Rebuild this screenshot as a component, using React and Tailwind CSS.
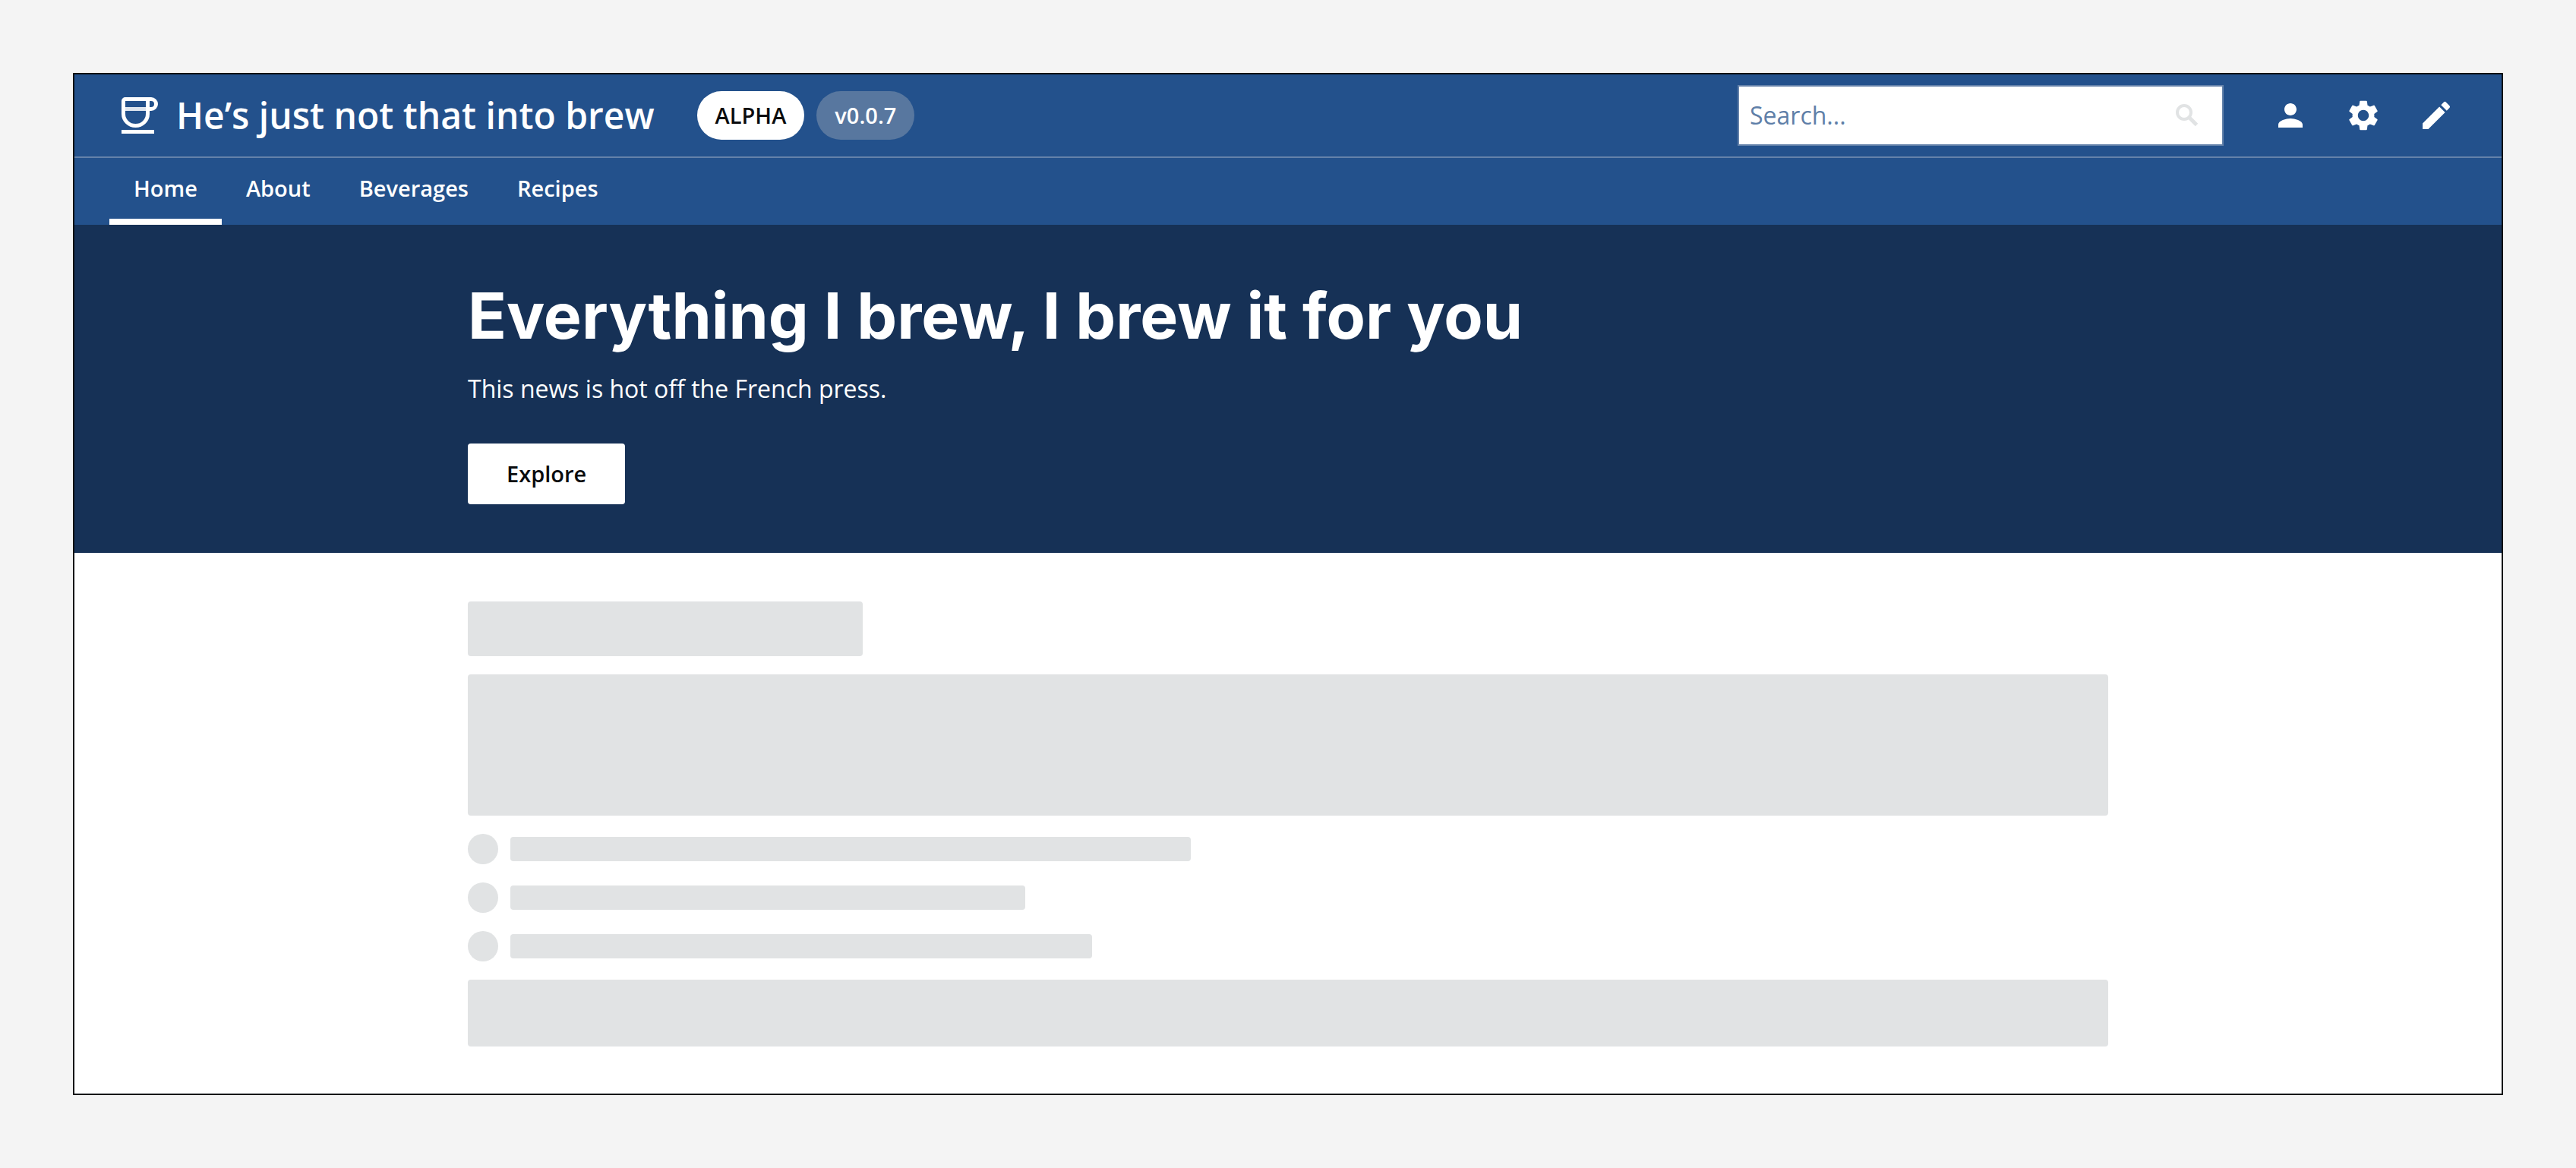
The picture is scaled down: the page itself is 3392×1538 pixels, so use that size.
import { MdPerson, MdSettings, MdEdit } from "react-icons/md";

const navItems = ["Home", "About", "Beverages", "Recipes"];

function CupLogo() {
  return (
    <svg viewBox="0 0 48 48" className="size-12 shrink-0" fill="none" stroke="white" strokeWidth="5" aria-hidden="true">
      <path d="M5 2.5H34.5V22A16 15.5 0 0 1 2.5 22V5A2.5 2.5 0 0 1 5 2.5Z" />
      <path d="M34 2.5H39A6.5 6.5 0 0 1 39 15.5H34" />
      <path strokeOpacity="0.85" d="M4 15.5H34" />
      <path d="M0 45.5H43" />
    </svg>
  );
}

function SearchIcon() {
  return (
    <svg viewBox="0 0 40 40" className="size-10 shrink-0" fill="none" stroke="#e1e3e4" aria-hidden="true">
      <circle cx="16" cy="16" r="9" strokeWidth="4" />
      <path d="M22.5 22.5L32.5 32.5" strokeWidth="5" />
    </svg>
  );
}

function Header() {
  return (
    <header className="bg-[#23518c] text-white">
      <div className="flex items-center justify-between border-b-2 border-[#6482aa] px-[62px] py-[14px]">
        <div className="flex items-center">
          <CupLogo />
          <span className="ml-6 text-[48px] leading-[64px] font-semibold">He’s just not that into brew</span>
          <span className="ml-14 rounded-full bg-white px-6 text-[29px] leading-[64px] font-semibold text-[#0b0c0e]">
            ALPHA
          </span>
          <span className="ml-4 rounded-full bg-[#58779f] px-6 text-[29px] leading-[64px] font-semibold">v0.0.7</span>
        </div>
        <div className="flex items-center">
          <label className="mr-16 flex h-20 w-[640px] items-center border-2 border-[#6482aa] bg-white pr-[26px] pl-[14px]">
            <input
              type="search"
              aria-label="Search"
              placeholder="Search..."
              className="min-w-0 flex-1 bg-transparent text-[32px] leading-[48px] text-black outline-none placeholder:text-[#5f7fa8]"
            />
            <SearchIcon />
          </label>
          <div className="flex gap-12">
            <button type="button" aria-label="Account">
              <MdPerson className="size-12" />
            </button>
            <button type="button" aria-label="Settings">
              <MdSettings className="size-12" />
            </button>
            <button type="button" aria-label="Edit">
              <MdEdit className="size-12" />
            </button>
          </div>
        </div>
      </div>
      <nav className="flex px-[46px]">
        {navItems.map((item, i) => (
          <a
            key={item}
            href="#"
            aria-current={i === 0 ? "page" : undefined}
            className="border-b-8 border-transparent px-8 py-5 text-[29px] leading-[40px] font-semibold aria-[current=page]:border-white"
          >
            {item}
          </a>
        ))}
      </nav>
    </header>
  );
}

function Hero() {
  return (
    <section className="bg-[#163156] px-16 py-16 text-white">
      <div className="mx-auto flex max-w-[2160px] flex-col items-start">
        <h1 className="font-['Inter',sans-serif] text-[84px] leading-[112px] font-bold">
          Everything I brew, I brew it for you
        </h1>
        <p className="mt-4 text-[32px] leading-[48px]">This news is hot off the French press.</p>
        <button
          type="button"
          className="mt-12 h-20 rounded-sm bg-white px-[51px] text-[29px] leading-[40px] font-semibold text-[#0b0c0e]"
        >
          Explore
        </button>
      </div>
    </section>
  );
}

function ListRow({ width }) {
  return (
    <li className="flex items-center gap-4">
      <span className="size-10 shrink-0 rounded-full bg-[#e1e3e4]" />
      <span className={"h-8 rounded-sm bg-[#e1e3e4] " + width} />
    </li>
  );
}

function Skeleton() {
  return (
    <main className="bg-white px-16 pt-16 pb-[62px]">
      <div className="mx-auto flex max-w-[2160px] flex-col gap-6">
        <div className="h-18 w-[520px] rounded-sm bg-[#e1e3e4]" />
        <div className="h-[186px] rounded-sm bg-[#e1e3e4]" />
        <ul className="flex flex-col gap-6">
          <ListRow width="w-[896px]" />
          <ListRow width="w-[678px]" />
          <ListRow width="w-[766px]" />
        </ul>
        <div className="h-22 rounded-sm bg-[#e1e3e4]" />
      </div>
    </main>
  );
}

export default function App() {
  return (
    <div className="min-h-screen bg-[#f4f4f4] p-24 font-['Open_Sans',sans-serif]">
      <div className="border-2 border-[#080c11]">
        <Header />
        <Hero />
        <Skeleton />
      </div>
    </div>
  );
}
